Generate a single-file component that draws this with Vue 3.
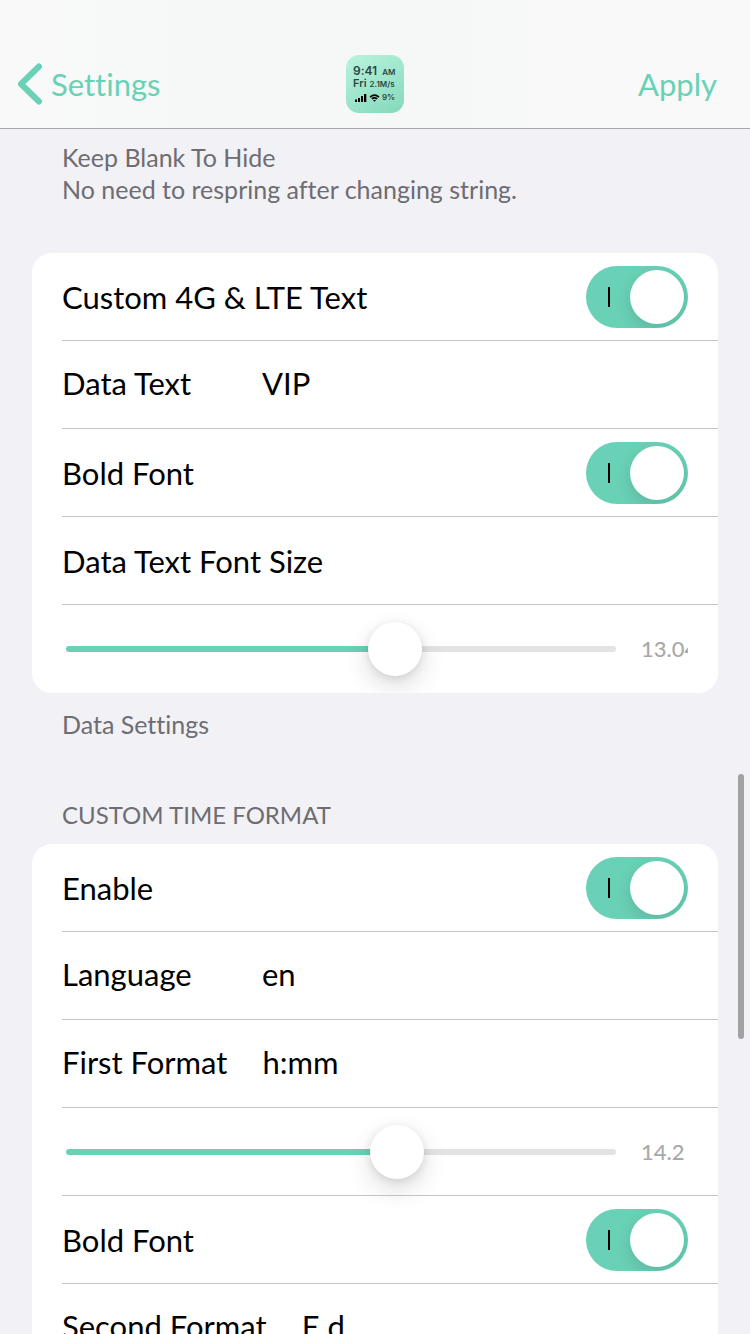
<script setup>
import { reactive } from 'vue'

const sections = reactive([
  {
    id: 'data',
    label: 'Data Settings',
    footer: 'Data Settings',
    rows: [
      { id: 'custom-data', type: 'switch', label: 'Custom 4G & LTE Text', value: true },
      { id: 'data-text', type: 'text', label: 'Data Text', value: 'VIP' },
      { id: 'data-bold', type: 'switch', label: 'Bold Font', value: true },
      { id: 'data-size-title', type: 'title', label: 'Data Text Font Size' },
      { id: 'data-size', type: 'slider', label: 'Data Text Font Size', value: 13.04, max: 21.4 },
    ],
  },
  {
    id: 'time',
    header: 'CUSTOM TIME FORMAT',
    label: 'Custom Time Format',
    rows: [
      { id: 'time-enable', type: 'switch', label: 'Enable', value: true },
      { id: 'language', type: 'text', label: 'Language', value: 'en' },
      { id: 'first-format', type: 'text', label: 'First Format', value: 'h:mm' },
      { id: 'first-size', type: 'slider', label: 'First Format Font Size', value: 14.2, max: 23.2 },
      { id: 'first-bold', type: 'switch', label: 'Bold Font', value: true },
      { id: 'second-format', type: 'text', label: 'Second Format', value: 'E d' },
    ],
  },
])

const fill = (row) => ({ '--fill': (row.value / row.max) * 100 + '%' })
</script>

<template>
  <div class="page">
    <header class="navbar">
      <a class="back" href="#">
        <svg class="chevron" viewBox="0 0 26 42" aria-hidden="true">
          <path d="M22 3.500L4 21L22 38.500" fill="none" stroke="currentColor" stroke-width="6" stroke-linecap="round" stroke-linejoin="round" />
        </svg>
        <span>Settings</span>
      </a>
      <div class="logo">
        <div class="logo-line time">9:41 <small>AM</small></div>
        <div class="logo-line day">Fri <small>2.1M/s</small></div>
        <div class="logo-line status">
          <svg class="bars" viewBox="0 0 12 8" aria-hidden="true">
            <path d="M0 5.500h2V8H0zM3 4h2v4H3zM6 2h2v6H6zM9 0h2.300v8H9z" />
          </svg>
          <svg class="wifi" viewBox="0 0 12 9" aria-hidden="true">
            <path d="M1 3.500Q6 -1 11 3.500M3 5.600Q6 3 9 5.600" fill="none" stroke="#000" stroke-width="1.800" />
            <path d="M4.300 7Q6 5.700 7.700 7L6 8.800z" />
          </svg>
          <small>9%</small>
        </div>
      </div>
      <button class="apply" type="button">Apply</button>
    </header>

    <main class="list">
      <p class="note intro">Keep Blank To Hide<br>No need to respring after changing string.</p>

      <section v-for="section in sections" :key="section.id" class="section" :aria-label="section.label">
        <h2 v-if="section.header" class="note heading">{{ section.header }}</h2>
        <div class="card">
          <div v-for="row in section.rows" :key="row.id" class="row" :class="row.type">
            <template v-if="row.type === 'switch'">
              <label :for="row.id">{{ row.label }}</label>
              <input :id="row.id" v-model="row.value" class="toggle" type="checkbox" role="switch">
            </template>
            <template v-else-if="row.type === 'text'">
              <label class="field-label" :for="row.id">{{ row.label }}</label>
              <input :id="row.id" v-model="row.value" class="field" type="text" spellcheck="false">
            </template>
            <template v-else-if="row.type === 'slider'">
              <input :id="row.id" v-model.number="row.value" class="range" :style="fill(row)" type="range" min="0" :max="row.max" step="any" :aria-label="row.label">
              <output class="amount" :for="row.id">{{ row.value }}</output>
            </template>
            <span v-else>{{ row.label }}</span>
          </div>
        </div>
        <p v-if="section.footer" class="note footer">{{ section.footer }}</p>
      </section>
    </main>
    <div class="scroll-thumb" aria-hidden="true"></div>
  </div>
</template>

<style>
body {
  background: #f2f1f6;
}
</style>

<style scoped>
.page {
  --accent: #69d1b6;
  position: relative;
  display: flex;
  flex-direction: column;
  height: 100vh;
  overflow: hidden;
  background: #f2f1f6;
  color: #000;
  font-family: Lato, "Liberation Sans", sans-serif;
  font-size: 31px;
  font-variant-ligatures: none;
  line-height: 40px;
}

.navbar {
  display: grid;
  grid-template-columns: 1fr auto 1fr;
  align-items: center;
  flex: none;
  padding: 40px 17px 0;
  height: 88px;
  border-bottom: 1px solid #a9a9ad;
  background: linear-gradient(90deg, #f9f9f9, #f5f8f7 35%, #f6f8f7 60%, #f9f9f9 80%);
}

.back {
  display: flex;
  align-items: center;
  gap: 8px;
  color: var(--accent);
  text-decoration: none;
}

.chevron {
  width: 26px;
  height: 42px;
}

.apply {
  justify-self: end;
  margin-right: 16px;
  padding: 0;
  border: 0;
  background: none;
  color: var(--accent);
  font: inherit;
}

.logo {
  box-sizing: border-box;
  width: 58px;
  height: 58px;
  padding: 9px 0 0 7px;
  border-radius: 13px;
  background: linear-gradient(150deg, #b9f4dd, #84d8bd);
  color: #2b4a41;
  font-family: Inter, sans-serif;
  font-weight: 600;
}

.logo-line {
  display: flex;
  align-items: baseline;
  gap: 3px;
  height: 13px;
  line-height: 13px;
  white-space: nowrap;
}

.logo small {
  font-size: 8px;
}

.time {
  gap: 5px;
  font-size: 12px;
}

.day {
  font-size: 11px;
}

.status {
  align-items: center;
  gap: 2px;
  padding: 1px 0 0 2px;
}

.bars {
  width: 12px;
  height: 8px;
}

.wifi {
  width: 11px;
  height: 8px;
}

.list {
  flex: 1;
  min-height: 0;
  padding: 12px 32px 0;
  overflow-y: auto;
  scrollbar-width: none;
}

.note {
  margin: 0;
  padding: 0 30px;
  color: #6d6d72;
  font-size: 25px;
  font-weight: 400;
  line-height: 32px;
}

.intro {
  margin-bottom: 48px;
}

.heading {
  margin: 59px 0 13px;
  font-size: 24px;
}

.footer {
  margin-top: 15px;
}

.card {
  border-radius: 20px;
  background: #fff;
  overflow: hidden;
}

.row {
  display: flex;
  align-items: center;
  box-sizing: border-box;
  height: 88px;
  margin-left: 30px;
  padding-right: 30px;
  border-bottom: 1px solid #c6c6c8;
}

.row:last-child {
  border-bottom: 0;
}

.switch {
  justify-content: space-between;
}

.text {
  padding-bottom: 4px;
}

.toggle {
  appearance: none;
  display: flex;
  align-items: center;
  justify-content: space-between;
  box-sizing: border-box;
  width: 102px;
  height: 62px;
  margin: 0;
  padding: 0 4px 0 22px;
  border-radius: 31px;
  background: #e4e4e6;
  overflow: hidden;
}

.toggle:checked {
  background: var(--accent);
}

.toggle::before {
  content: "";
  width: 2px;
  height: 20px;
  background: #000;
}

.toggle::after {
  content: "";
  width: 54px;
  height: 54px;
  border-radius: 50%;
  background: #fff;
  box-shadow: 0 6px 16px rgba(0, 0, 0, 0.12);
}

.toggle:not(:checked) {
  flex-direction: row-reverse;
  padding: 0 22px 0 4px;
}

.field-label {
  box-sizing: border-box;
  flex: none;
  min-width: 200px;
  padding-right: 35px;
}

.field {
  flex: 1;
  min-width: 0;
  padding: 0;
  border: 0;
  outline: 0;
  background: none;
  color: inherit;
  font: inherit;
}

.slider {
  padding-left: 4px;
}

.range {
  appearance: none;
  flex: 1;
  min-width: 0;
  height: 54px;
  margin: 0;
  background: none;
}

.range::-webkit-slider-runnable-track {
  height: 6px;
  border-radius: 3px;
  background: linear-gradient(90deg, var(--accent) var(--fill), #e3e3e5 var(--fill));
}

.range::-webkit-slider-thumb {
  appearance: none;
  width: 54px;
  height: 54px;
  margin-top: -24px;
  border-radius: 50%;
  background: #fff;
  box-shadow: 0 10px 26px rgba(0, 0, 0, 0.14), 0 2px 8px rgba(0, 0, 0, 0.1);
}

.amount {
  flex: none;
  width: 47px;
  margin-left: 25px;
  overflow: hidden;
  color: #a9a9a9;
  font-size: 22px;
  font-weight: 500;
  line-height: 32px;
  white-space: nowrap;
}

.scroll-thumb {
  position: absolute;
  top: 58%;
  right: 6px;
  width: 6px;
  height: 265px;
  border-radius: 3px;
  background: #a2a2a5;
}
</style>
